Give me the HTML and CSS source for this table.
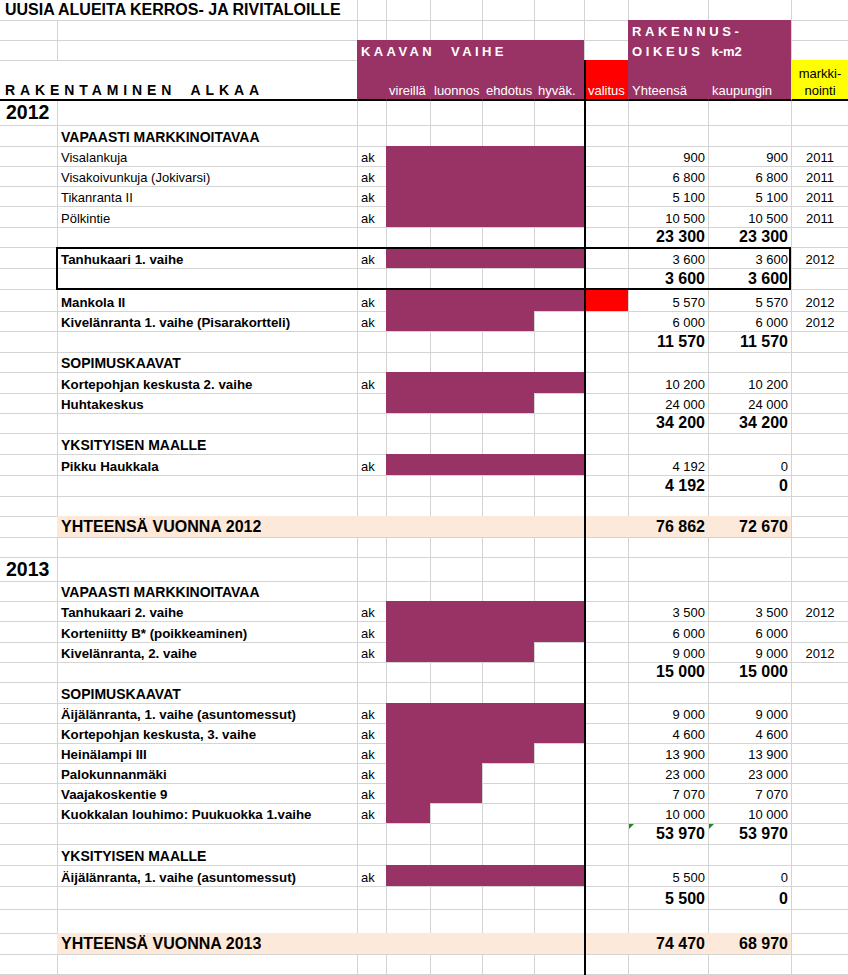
FILE: index.html
```html
<!DOCTYPE html>
<html lang="fi">
<head>
<meta charset="utf-8">
<title>Uusia alueita kerros- ja rivitaloille</title>
<link rel="stylesheet" href="styles.css">
</head>
<body>
<div class="sheet">

<div class="r h20 first">
  <div class="c s2 title">UUSIA ALUEITA KERROS- JA RIVITALOILLE</div>
  <div class="c"></div><div class="c"></div><div class="c"></div><div class="c"></div><div class="c"></div><div class="c"></div><div class="c"></div><div class="c"></div><div class="c"></div>
</div>

<div class="r h20">
  <div class="c"></div><div class="c"></div><div class="c"></div><div class="c"></div><div class="c"></div><div class="c"></div><div class="c"></div><div class="c"></div>
  <div class="c s2 p w hd"><span class="sp">RAKENNUS-</span></div>
  <div class="c"></div>
</div>

<div class="r h20">
  <div class="c"></div><div class="c"></div>
  <div class="c s5 p w hd"><span class="kv">KAAVAN VAIHE</span></div>
  <div class="c"></div>
  <div class="c s2 p w hd"><span class="sp">OIKEUS</span><span class="km">k-m2</span></div>
  <div class="c"></div>
</div>

<div class="r h41 hdr">
  <div class="c s2 rak">RAKENTAMINEN ALKAA</div>
  <div class="c p"></div>
  <div class="c p w lab">vireillä</div>
  <div class="c p w">luonnos</div>
  <div class="c p w">ehdotus</div>
  <div class="c p w">hyväk.</div>
  <div class="c rd w">valitus</div>
  <div class="c p w">Yhteensä</div>
  <div class="c p w">kaupungin</div>
  <div class="c yl mk">markki-<br>nointi</div>
</div>

<div class="r h24 nb">
  <div class="c yr">2012</div>
  <div class="c"></div><div class="c"></div><div class="c"></div><div class="c"></div><div class="c"></div><div class="c"></div><div class="c"></div><div class="c"></div><div class="c"></div><div class="c"></div>
</div>

<div class="r h21">
  <div class="c"></div><div class="c sec">VAPAASTI MARKKINOITAVAA</div>
  <div class="c"></div><div class="c"></div><div class="c"></div><div class="c"></div><div class="c"></div><div class="c"></div><div class="c"></div><div class="c"></div><div class="c"></div>
</div>

<div class="r h20">
  <div class="c"></div><div class="c">Visalankuja</div><div class="c">ak</div>
  <div class="c p"></div><div class="c p"></div><div class="c p"></div><div class="c p"></div>
  <div class="c"></div><div class="c n">900</div><div class="c n">900</div><div class="c y">2011</div>
</div>
<div class="r h20">
  <div class="c"></div><div class="c">Visakoivunkuja (Jokivarsi)</div><div class="c">ak</div>
  <div class="c p"></div><div class="c p"></div><div class="c p"></div><div class="c p"></div>
  <div class="c"></div><div class="c n">6 800</div><div class="c n">6 800</div><div class="c y">2011</div>
</div>
<div class="r h20">
  <div class="c"></div><div class="c">Tikanranta II</div><div class="c">ak</div>
  <div class="c p"></div><div class="c p"></div><div class="c p"></div><div class="c p"></div>
  <div class="c"></div><div class="c n">5 100</div><div class="c n">5 100</div><div class="c y">2011</div>
</div>
<div class="r h21">
  <div class="c"></div><div class="c">Pölkintie</div><div class="c">ak</div>
  <div class="c p"></div><div class="c p"></div><div class="c p"></div><div class="c p"></div>
  <div class="c"></div><div class="c n">10 500</div><div class="c n">10 500</div><div class="c y">2011</div>
</div>
<div class="r h20">
  <div class="c"></div><div class="c"></div><div class="c"></div><div class="c"></div><div class="c"></div><div class="c"></div><div class="c"></div><div class="c"></div>
  <div class="c n t">23 300</div><div class="c n t">23 300</div><div class="c"></div>
</div>

<div class="r h21">
  <div class="c"></div><div class="c b">Tanhukaari 1. vaihe</div><div class="c">ak</div>
  <div class="c p"></div><div class="c p"></div><div class="c p"></div><div class="c p"></div>
  <div class="c"></div><div class="c n">3 600</div><div class="c n">3 600</div><div class="c y">2012</div>
</div>
<div class="r h21">
  <div class="c"></div><div class="c"></div><div class="c"></div><div class="c"></div><div class="c"></div><div class="c"></div><div class="c"></div><div class="c"></div>
  <div class="c n t">3 600</div><div class="c n t">3 600</div><div class="c"></div>
</div>

<div class="r h22">
  <div class="c"></div><div class="c b">Mankola II</div><div class="c">ak</div>
  <div class="c p"></div><div class="c p"></div><div class="c p"></div><div class="c p"></div>
  <div class="c rd"></div><div class="c n">5 570</div><div class="c n">5 570</div><div class="c y">2012</div>
</div>
<div class="r h20">
  <div class="c"></div><div class="c b">Kivelänranta 1. vaihe (Pisarakortteli)</div><div class="c">ak</div>
  <div class="c p"></div><div class="c p"></div><div class="c p"></div><div class="c"></div>
  <div class="c"></div><div class="c n">6 000</div><div class="c n">6 000</div><div class="c y">2012</div>
</div>
<div class="r h21">
  <div class="c"></div><div class="c"></div><div class="c"></div><div class="c"></div><div class="c"></div><div class="c"></div><div class="c"></div><div class="c"></div>
  <div class="c n t">11 570</div><div class="c n t">11 570</div><div class="c"></div>
</div>

<div class="r h20">
  <div class="c"></div><div class="c sec">SOPIMUSKAAVAT</div>
  <div class="c"></div><div class="c"></div><div class="c"></div><div class="c"></div><div class="c"></div><div class="c"></div><div class="c"></div><div class="c"></div><div class="c"></div>
</div>
<div class="r h21">
  <div class="c"></div><div class="c b">Kortepohjan keskusta 2. vaihe</div><div class="c">ak</div>
  <div class="c p"></div><div class="c p"></div><div class="c p"></div><div class="c p"></div>
  <div class="c"></div><div class="c n">10 200</div><div class="c n">10 200</div><div class="c"></div>
</div>
<div class="r h20">
  <div class="c"></div><div class="c b">Huhtakeskus</div><div class="c"></div>
  <div class="c p"></div><div class="c p"></div><div class="c p"></div><div class="c"></div>
  <div class="c"></div><div class="c n">24 000</div><div class="c n">24 000</div><div class="c"></div>
</div>
<div class="r h20">
  <div class="c"></div><div class="c"></div><div class="c"></div><div class="c"></div><div class="c"></div><div class="c"></div><div class="c"></div><div class="c"></div>
  <div class="c n t">34 200</div><div class="c n t">34 200</div><div class="c"></div>
</div>

<div class="r h21">
  <div class="c"></div><div class="c sec">YKSITYISEN MAALLE</div>
  <div class="c"></div><div class="c"></div><div class="c"></div><div class="c"></div><div class="c"></div><div class="c"></div><div class="c"></div><div class="c"></div><div class="c"></div>
</div>
<div class="r h21">
  <div class="c"></div><div class="c b">Pikku Haukkala</div><div class="c">ak</div>
  <div class="c p"></div><div class="c p"></div><div class="c p"></div><div class="c p"></div>
  <div class="c"></div><div class="c n">4 192</div><div class="c n">0</div><div class="c"></div>
</div>
<div class="r h21">
  <div class="c"></div><div class="c"></div><div class="c"></div><div class="c"></div><div class="c"></div><div class="c"></div><div class="c"></div><div class="c"></div>
  <div class="c n t">4 192</div><div class="c n t">0</div><div class="c"></div>
</div>
<div class="r h20">
  <div class="c"></div><div class="c"></div><div class="c"></div><div class="c"></div><div class="c"></div><div class="c"></div><div class="c"></div><div class="c"></div><div class="c"></div><div class="c"></div><div class="c"></div>
</div>

<div class="r h21">
  <div class="c"></div><div class="c pe t">YHTEENSÄ VUONNA 2012</div>
  <div class="c pe"></div><div class="c pe"></div><div class="c pe"></div><div class="c pe"></div><div class="c pe"></div><div class="c pe"></div>
  <div class="c pe n t">76 862</div><div class="c pe n t">72 670</div><div class="c"></div>
</div>
<div class="r h20">
  <div class="c"></div><div class="c"></div><div class="c"></div><div class="c"></div><div class="c"></div><div class="c"></div><div class="c"></div><div class="c"></div><div class="c"></div><div class="c"></div><div class="c"></div>
</div>

<div class="r h24">
  <div class="c yr">2013</div>
  <div class="c"></div><div class="c"></div><div class="c"></div><div class="c"></div><div class="c"></div><div class="c"></div><div class="c"></div><div class="c"></div><div class="c"></div><div class="c"></div>
</div>
<div class="r h20">
  <div class="c"></div><div class="c sec">VAPAASTI MARKKINOITAVAA</div>
  <div class="c"></div><div class="c"></div><div class="c"></div><div class="c"></div><div class="c"></div><div class="c"></div><div class="c"></div><div class="c"></div><div class="c"></div>
</div>
<div class="r h20">
  <div class="c"></div><div class="c b">Tanhukaari 2. vaihe</div><div class="c">ak</div>
  <div class="c p"></div><div class="c p"></div><div class="c p"></div><div class="c p"></div>
  <div class="c"></div><div class="c n">3 500</div><div class="c n">3 500</div><div class="c y">2012</div>
</div>
<div class="r h21">
  <div class="c"></div><div class="c b">Korteniitty B* (poikkeaminen)</div><div class="c">ak</div>
  <div class="c p"></div><div class="c p"></div><div class="c p"></div><div class="c p"></div>
  <div class="c"></div><div class="c n">6 000</div><div class="c n">6 000</div><div class="c"></div>
</div>
<div class="r h20">
  <div class="c"></div><div class="c b">Kivelänranta, 2. vaihe</div><div class="c">ak</div>
  <div class="c p"></div><div class="c p"></div><div class="c p"></div><div class="c"></div>
  <div class="c"></div><div class="c n">9 000</div><div class="c n">9 000</div><div class="c y">2012</div>
</div>
<div class="r h20">
  <div class="c"></div><div class="c"></div><div class="c"></div><div class="c"></div><div class="c"></div><div class="c"></div><div class="c"></div><div class="c"></div>
  <div class="c n t">15 000</div><div class="c n t">15 000</div><div class="c"></div>
</div>

<div class="r h21">
  <div class="c"></div><div class="c sec">SOPIMUSKAAVAT</div>
  <div class="c"></div><div class="c"></div><div class="c"></div><div class="c"></div><div class="c"></div><div class="c"></div><div class="c"></div><div class="c"></div><div class="c"></div>
</div>
<div class="r h20">
  <div class="c"></div><div class="c b">Äijälänranta, 1. vaihe (asuntomessut)</div><div class="c">ak</div>
  <div class="c p"></div><div class="c p"></div><div class="c p"></div><div class="c p"></div>
  <div class="c"></div><div class="c n">9 000</div><div class="c n">9 000</div><div class="c"></div>
</div>
<div class="r h20">
  <div class="c"></div><div class="c b">Kortepohjan keskusta, 3. vaihe</div><div class="c">ak</div>
  <div class="c p"></div><div class="c p"></div><div class="c p"></div><div class="c p"></div>
  <div class="c"></div><div class="c n">4 600</div><div class="c n">4 600</div><div class="c"></div>
</div>
<div class="r h20">
  <div class="c"></div><div class="c b">Heinälampi III</div><div class="c">ak</div>
  <div class="c p"></div><div class="c p"></div><div class="c p"></div><div class="c"></div>
  <div class="c"></div><div class="c n">13 900</div><div class="c n">13 900</div><div class="c"></div>
</div>
<div class="r h20">
  <div class="c"></div><div class="c b">Palokunnanmäki</div><div class="c">ak</div>
  <div class="c p"></div><div class="c p"></div><div class="c"></div><div class="c"></div>
  <div class="c"></div><div class="c n">23 000</div><div class="c n">23 000</div><div class="c"></div>
</div>
<div class="r h20">
  <div class="c"></div><div class="c b">Vaajakoskentie 9</div><div class="c">ak</div>
  <div class="c p"></div><div class="c p"></div><div class="c"></div><div class="c"></div>
  <div class="c"></div><div class="c n">7 070</div><div class="c n">7 070</div><div class="c"></div>
</div>
<div class="r h20">
  <div class="c"></div><div class="c b">Kuokkalan louhimo: Puukuokka 1.vaihe</div><div class="c">ak</div>
  <div class="c p"></div><div class="c"></div><div class="c"></div><div class="c"></div>
  <div class="c"></div><div class="c n">10 000</div><div class="c n">10 000</div><div class="c"></div>
</div>
<div class="r h21">
  <div class="c"></div><div class="c"></div><div class="c"></div><div class="c"></div><div class="c"></div><div class="c"></div><div class="c"></div><div class="c"></div>
  <div class="c n t tri">53 970</div><div class="c n t tri">53 970</div><div class="c"></div>
</div>

<div class="r h21">
  <div class="c"></div><div class="c sec">YKSITYISEN MAALLE</div>
  <div class="c"></div><div class="c"></div><div class="c"></div><div class="c"></div><div class="c"></div><div class="c"></div><div class="c"></div><div class="c"></div><div class="c"></div>
</div>
<div class="r h21">
  <div class="c"></div><div class="c b">Äijälänranta, 1. vaihe (asuntomessut)</div><div class="c">ak</div>
  <div class="c p"></div><div class="c p"></div><div class="c p"></div><div class="c p"></div>
  <div class="c"></div><div class="c n">5 500</div><div class="c n">0</div><div class="c"></div>
</div>
<div class="r h23">
  <div class="c"></div><div class="c"></div><div class="c"></div><div class="c"></div><div class="c"></div><div class="c"></div><div class="c"></div><div class="c"></div>
  <div class="c n t">5 500</div><div class="c n t">0</div><div class="c"></div>
</div>
<div class="r h24">
  <div class="c"></div><div class="c"></div><div class="c"></div><div class="c"></div><div class="c"></div><div class="c"></div><div class="c"></div><div class="c"></div><div class="c"></div><div class="c"></div><div class="c"></div>
</div>

<div class="r h21">
  <div class="c"></div><div class="c pe t">YHTEENSÄ VUONNA 2013</div>
  <div class="c pe"></div><div class="c pe"></div><div class="c pe"></div><div class="c pe"></div><div class="c pe"></div><div class="c pe"></div>
  <div class="c pe n t">74 470</div><div class="c pe n t">68 970</div><div class="c"></div>
</div>
<div class="r h20">
  <div class="c"></div><div class="c"></div><div class="c"></div><div class="c"></div><div class="c"></div><div class="c"></div><div class="c"></div><div class="c"></div><div class="c"></div><div class="c"></div><div class="c"></div>
</div>
<div class="r h20">
  <div class="c"></div><div class="c"></div><div class="c"></div><div class="c"></div><div class="c"></div><div class="c"></div><div class="c"></div><div class="c"></div><div class="c"></div><div class="c"></div><div class="c"></div>
</div>

<div class="vline"></div>
<div class="box"></div>
</div>
</body>
</html>
```

FILE: styles.css
```css
* { box-sizing: border-box; }
html, body { margin: 0; padding: 0; overflow: hidden; background: #fff; }
body {
  font-family: "Liberation Sans", Arial, sans-serif;
  font-size: 13px;
  color: #000;
}
.sheet {
  position: relative;
  width: 848px;
  height: 975px;
  overflow: hidden;
}
.r {
  display: grid;
  grid-template-columns: 57px 300px 29px 44px 52px 52px 50px 44px 80px 83px 57px;
}
.h20 { height: 20px; }
.h21 { height: 21px; }
.h22 { height: 22px; }
.h23 { height: 23px; }
.h24 { height: 24px; }
.h41 { height: 41px; }

.c {
  position: relative;
  min-width: 0;
  display: flex;
  align-items: flex-end;
  padding: 0 3px 1px 3px;
  border-left: 1px solid #d4d4d4;
  border-top: 1px solid #d4d4d4;
  white-space: nowrap;
  line-height: normal;
}
.r > .c:first-child { border-left: none; padding-left: 4px; }
.first .c { border-top: none; }
.nb .c { border-top: none; }
.hdr .c { border-bottom: 2px solid #000; }

.s2 { grid-column: span 2; }
.s5 { grid-column: span 5; }

.p  { background: #993366; border-color: #993366; }
.rd { background: #ff0000; border-color: #ff0000; }
.yl { background: #ffff00; border-color: #ffff00; }
.pe { background: #fde9d9; border-color: #fde9d9; }
.hdr .c { border-bottom-color: #000; }

.w { color: #fff; }
.n { justify-content: flex-end; }
.y { justify-content: center; }
.b { font-weight: bold; font-size: 13.3px; }
.t { font-weight: bold; font-size: 16px; }
.sec { font-weight: bold; font-size: 14px; }
.yr { font-weight: bold; font-size: 19.5px; padding-left: 6px !important; }

.title { font-weight: bold; font-size: 16px; padding-left: 5px !important; }
.rak {
  font-weight: bold;
  font-size: 14px;
  letter-spacing: 4.9px;
  word-spacing: 6px;
  padding-left: 5px !important;
}
.hd { font-weight: bold; font-size: 13px; }
.sp { letter-spacing: 3.6px; }
.km { margin-left: 8px; }
.kv { letter-spacing: 3.4px; word-spacing: 9px; }
.lab { padding-left: 2px; }
.mk {
  flex-direction: column;
  justify-content: flex-end;
  align-items: center;
  text-align: center;
  line-height: 17px;
  padding-bottom: 0;
}

.tri::before {
  content: "";
  position: absolute;
  left: 0;
  top: 0;
  border-top: 5px solid #1f8a1f;
  border-right: 5px solid transparent;
}

.vline {
  position: absolute;
  left: 584px;
  top: 60px;
  bottom: 0;
  width: 2px;
  background: #000;
}
.box {
  position: absolute;
  left: 56px;
  top: 247px;
  width: 735px;
  height: 43px;
  border: 2px solid #000;
}
```
